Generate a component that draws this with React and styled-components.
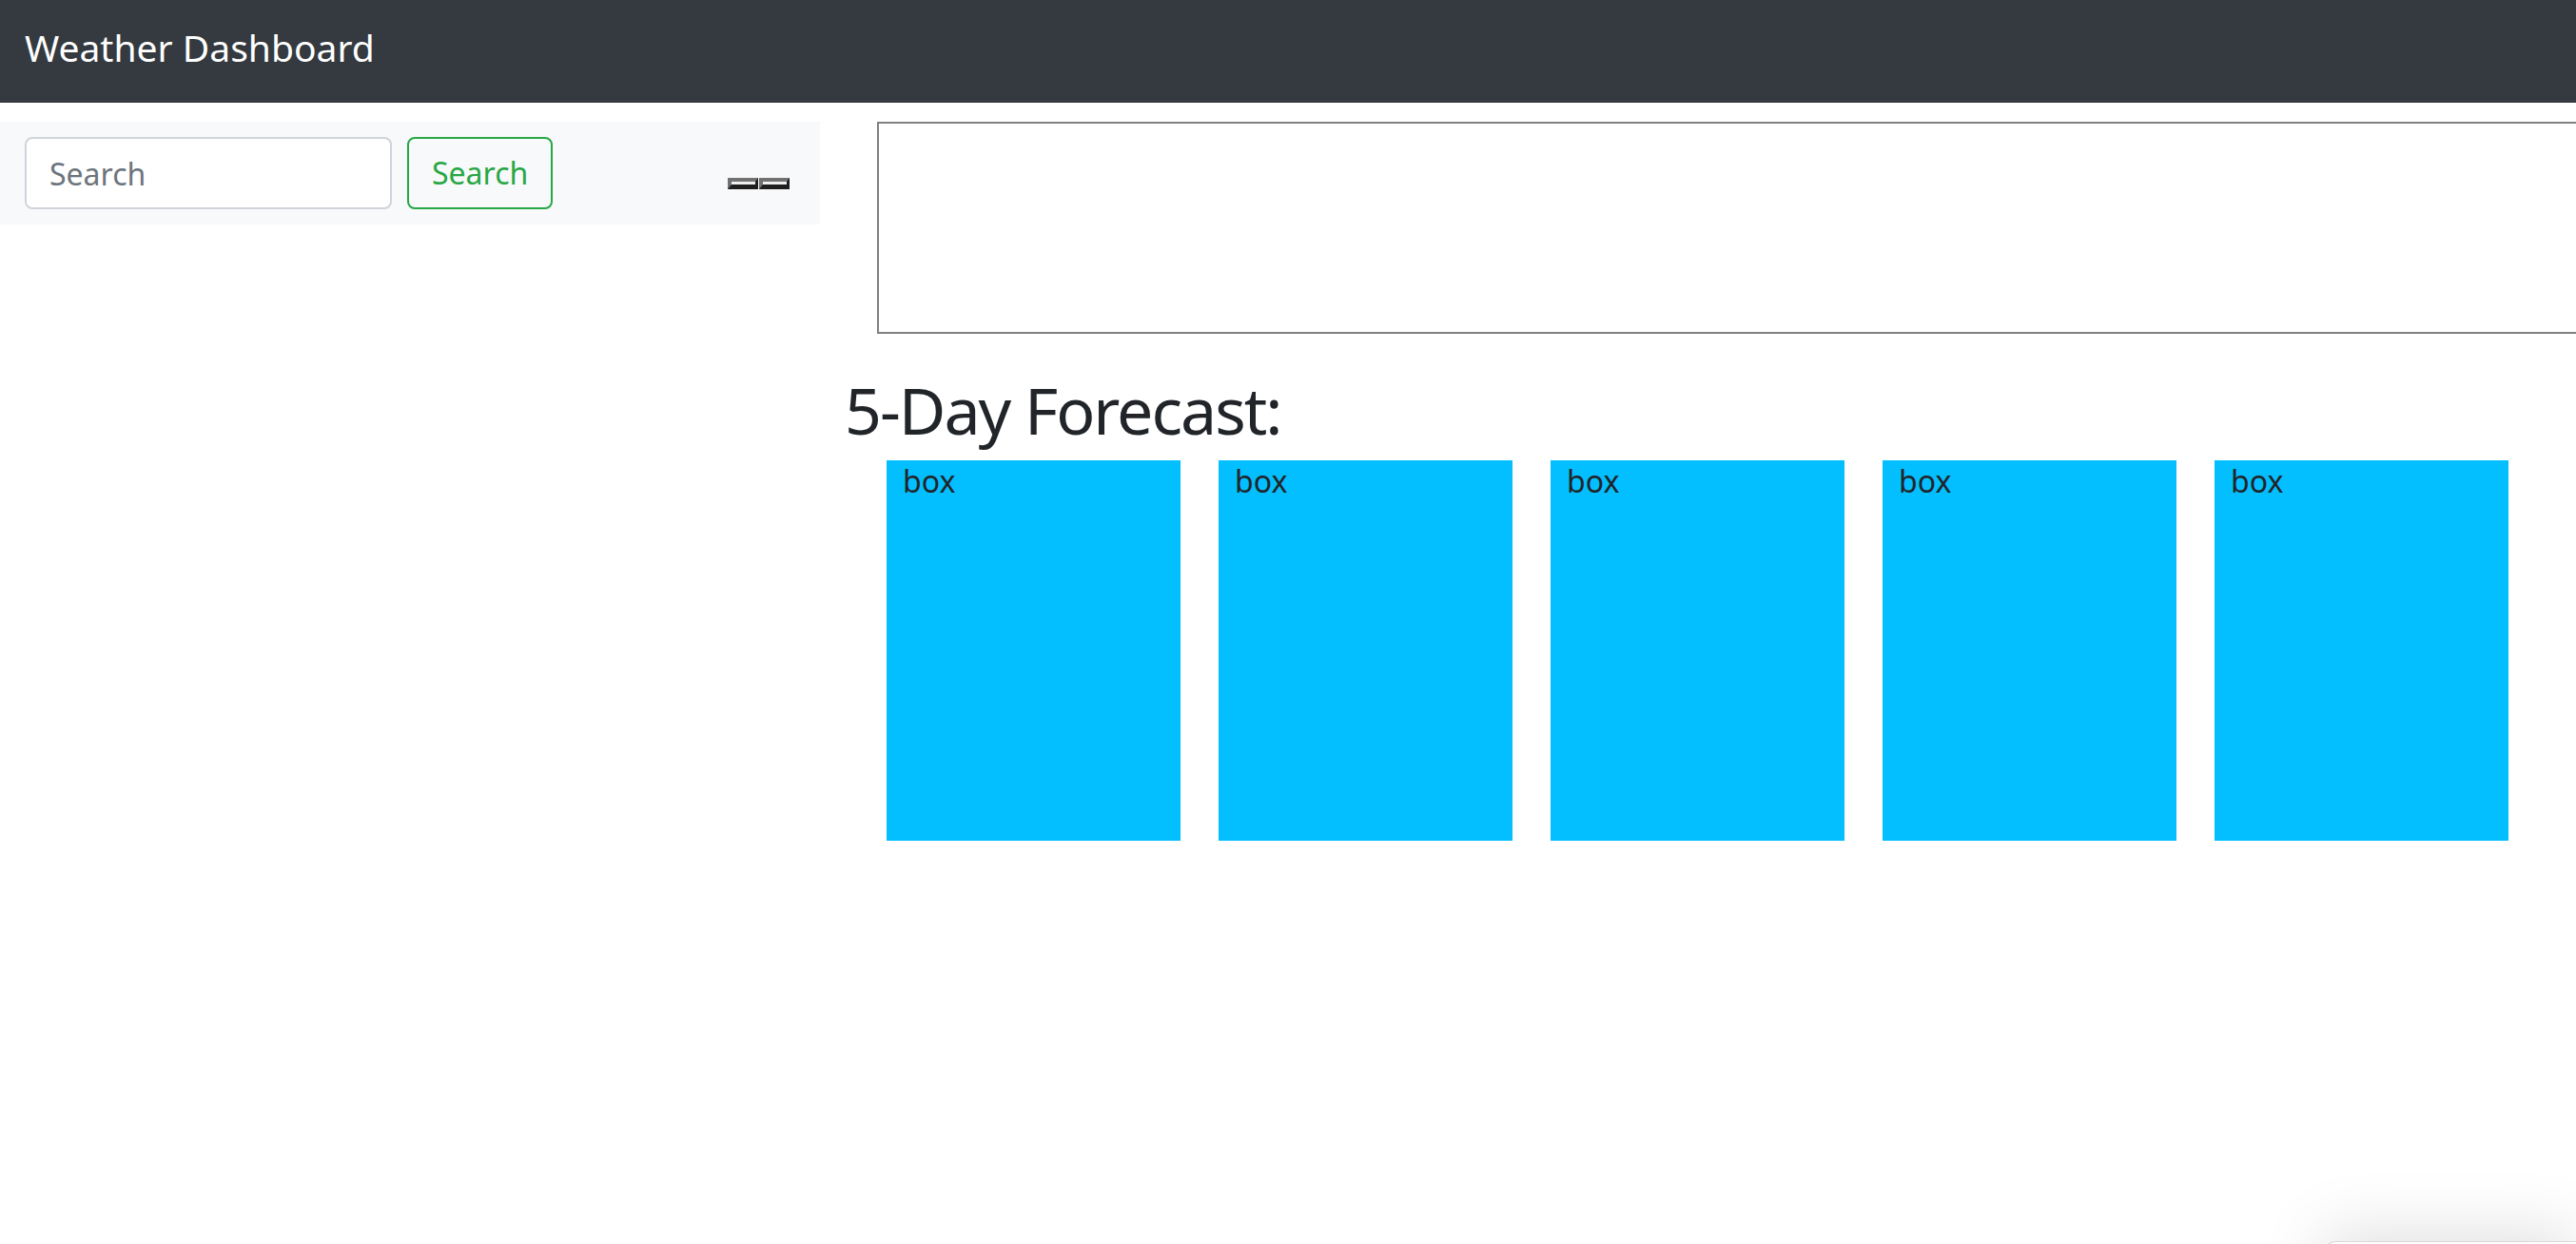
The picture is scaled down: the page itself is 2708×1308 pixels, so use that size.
import styled, { createGlobalStyle } from "styled-components";

const GlobalStyle = createGlobalStyle`
  html, body {
    margin: 0;
    padding: 0;
    overflow: hidden;
    background: #ffffff;
  }

  body {
    font-family: "Noto Sans", "Open Sans", sans-serif;
    color: #212529;
  }

  * {
    box-sizing: border-box;
  }
`;

const Navbar = styled.nav`
  display: flex;
  align-items: center;
  height: 108px;
  padding: 0 26px 7px 26px;
  background-color: #343a40;
`;

const Brand = styled.span`
  color: #ffffff;
  font-size: 39px;
  line-height: 1.2;
`;

const Main = styled.main`
  display: flex;
  align-items: flex-start;
  margin-top: 20px;
`;

const Sidebar = styled.div`
  flex: 0 0 862px;
`;

const SearchBar = styled.form`
  display: flex;
  align-items: center;
  padding: 16px 26px;
  background-color: #f8f9fa;

  input {
    width: 386px;
    height: 76px;
    padding: 12px 24px;
    font-family: inherit;
    font-size: 32px;
    line-height: 1.5;
    color: #495057;
    background: #ffffff;
    border: 2px solid #ced4da;
    border-radius: 8px;
    outline: none;

    &::placeholder {
      color: #6c757d;
    }
  }

  button {
    height: 76px;
    margin-left: 16px;
    padding: 12px 24px;
    font-family: inherit;
    font-size: 32px;
    line-height: 1.5;
    color: #28a745;
    background: transparent;
    border: 2px solid #28a745;
    border-radius: 8px;
    cursor: pointer;
  }
`;

const Toggler = styled.div`
  display: flex;
  margin-left: auto;
  margin-right: 6px;
  margin-top: 22px;
`;

const TogglerBar = styled.span`
  display: block;
  width: 32px;
  height: 12px;
  margin-left: ${(p) => (p.$first ? "0" : "1px")};
  background: #efefef;
  border-style: solid;
  border-width: 4px 3px 5px 4px;
  border-color: #727272 #1f1f1f #1f1f1f #727272;
`;

const Content = styled.div`
  flex: 1;
  min-width: 0;
`;

const Current = styled.section`
  width: 1900px;
  height: 223px;
  margin-left: 60px;
  border: 2px solid #808080;
`;

const Heading = styled.h2`
  margin: 39px 0 12px 26px;
  font-size: 68px;
  font-weight: 400;
  line-height: 1.2;
  letter-spacing: -2px;
  color: #212529;
`;

const ForecastRow = styled.div`
  display: flex;
  gap: 40px;
  margin-left: 70px;
`;

const DayBox = styled.div`
  width: 309px;
  height: 400px;
  padding: 1px 17px;
  background-color: #03bfff;
  font-size: 32px;
  line-height: 1.3;
  color: #212529;
`;

const Widget = styled.div`
  position: fixed;
  right: 0;
  top: 1305px;
  width: 266px;
  height: 120px;
  background: #ffffff;
  border-top: 1px solid #d9d9d9;
  border-left: 1px solid #d9d9d9;
  border-top-left-radius: 14px;
  box-shadow: 0 -8px 70px rgba(0, 0, 0, 0.13);
`;

const days = [1, 2, 3, 4, 5];

export default function App() {
  return (
    <>
      <GlobalStyle />
      <Navbar>
        <Brand>Weather Dashboard</Brand>
      </Navbar>
      <Main>
        <Sidebar>
          <SearchBar onSubmit={(e) => e.preventDefault()}>
            <input type="search" placeholder="Search" aria-label="Search" />
            <button type="submit">Search</button>
            <Toggler>
              <TogglerBar $first />
              <TogglerBar />
            </Toggler>
          </SearchBar>
        </Sidebar>
        <Content>
          <Current />
          <Heading>5-Day Forecast:</Heading>
          <ForecastRow>
            {days.map((d) => (
              <DayBox key={d}>box</DayBox>
            ))}
          </ForecastRow>
        </Content>
      </Main>
      <Widget />
    </>
  );
}
